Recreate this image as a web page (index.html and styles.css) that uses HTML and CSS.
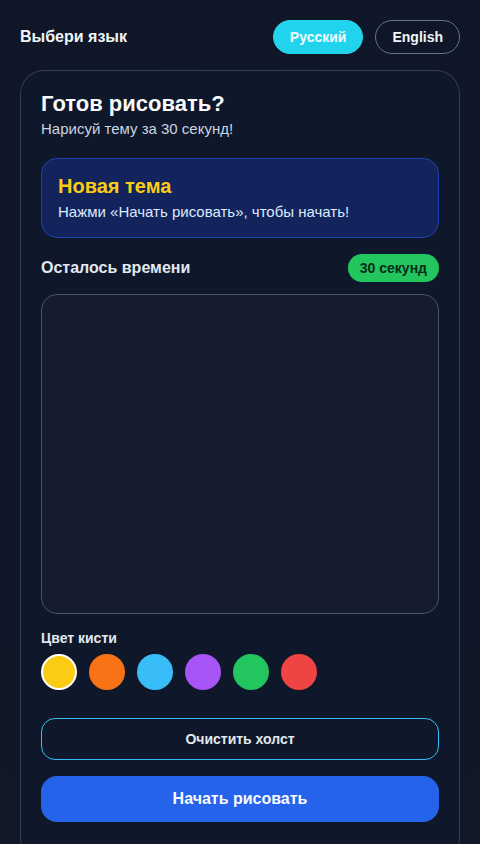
FILE: index.html
```html
<!DOCTYPE html>
<html lang="ru">
<head>
<meta charset="utf-8">
<title>Рисование</title>
<link rel="stylesheet" href="styles.css">
</head>
<body>
<div class="page">
  <header class="top">
    <div class="top-title">Выбери язык</div>
    <div class="langs">
      <button class="lang lang-active">Русский</button>
      <button class="lang">English</button>
    </div>
  </header>
  <main class="card">
    <h1 class="title">Готов рисовать?</h1>
    <p class="subtitle">Нарисуй тему за 30 секунд!</p>
    <section class="topic">
      <div class="topic-name">Новая тема</div>
      <div class="topic-hint">Нажми «Начать рисовать», чтобы начать!</div>
    </section>
    <div class="timer-row">
      <div class="timer-label">Осталось времени</div>
      <div class="badge">30 секунд</div>
    </div>
    <div class="canvas"></div>
    <div class="brush-label">Цвет кисти</div>
    <div class="swatches">
      <span class="swatch sw-yellow sw-active"></span>
      <span class="swatch sw-orange"></span>
      <span class="swatch sw-sky"></span>
      <span class="swatch sw-purple"></span>
      <span class="swatch sw-green"></span>
      <span class="swatch sw-red"></span>
    </div>
    <button class="btn-clear">Очистить холст</button>
    <button class="btn-start">Начать рисовать</button>
  </main>
</div>
</body>
</html>
```
FILE: styles.css
```css
* { box-sizing: border-box; }
html, body { margin: 0; padding: 0; }
body {
  background: radial-gradient(circle at 50% 30%, #0f172a 0%, #0e1627 60%, #111827 100%);
  min-height: 844px;
  font-family: "Liberation Sans", Arial, sans-serif;
  color: #f8fafc;
  overflow: hidden;
}
.page { padding: 20px 20px 0; }
.top {
  display: flex;
  align-items: center;
  justify-content: space-between;
  height: 34px;
}
.top-title { font-size: 16px; font-weight: 700; color: #f1f5f9; }
.langs { display: flex; gap: 12px; }
.lang {
  font-family: inherit;
  font-size: 14px;
  font-weight: 700;
  height: 34px;
  padding: 0 16px;
  border-radius: 17px;
  border: 1px solid #64748b;
  background: transparent;
  color: #f1f5f9;
}
.lang-active {
  background: #22d3ee;
  border-color: #22d3ee;
  color: #f0fdff;
}
.card {
  margin-top: 16px;
  border: 1px solid rgba(148, 163, 184, 0.28);
  border-radius: 24px;
  background: #0f172a;
  padding: 20px 20px 40px;
  display: flex;
  flex-direction: column;
}
.title { margin: 0; font-size: 22px; font-weight: 700; line-height: 26px; color: #f8fafc; }
.subtitle { margin: 3px 0 0; font-size: 15px; line-height: 18px; color: #cbd5e1; }
.topic {
  margin-top: 20px;
  background: #13245c;
  border: 1px solid #1e40af;
  border-radius: 16px;
  padding: 15px 16px 16px;
}
.topic-name { font-size: 20px; font-weight: 700; color: #facc15; line-height: 24px; }
.topic-hint { margin-top: 5px; font-size: 15px; line-height: 18px; color: #dbeafe; }
.timer-row {
  margin-top: 16px;
  display: flex;
  align-items: center;
  justify-content: space-between;
  height: 28px;
}
.timer-label { font-size: 16px; font-weight: 700; color: #e2e8f0; }
.badge {
  background: #22c55e;
  color: #052e16;
  font-size: 14px;
  font-weight: 700;
  height: 28px;
  line-height: 28px;
  padding: 0 12px;
  border-radius: 14px;
}
.canvas {
  margin-top: 12px;
  height: 320px;
  border: 1px solid #475569;
  border-radius: 16px;
  background: #141c2e;
}
.brush-label { margin-top: 16px; font-size: 14px; font-weight: 700; color: #e2e8f0; line-height: 16px; }
.swatches { margin-top: 8px; display: flex; gap: 12px; }
.swatch { width: 36px; height: 36px; border-radius: 50%; display: block; }
.sw-active { border: 2px solid #ffffff; }
.sw-yellow { background: #facc15; }
.sw-orange { background: #f97316; }
.sw-sky { background: #38bdf8; }
.sw-purple { background: #a855f7; }
.sw-green { background: #22c55e; }
.sw-red { background: #ef4444; }
.btn-clear {
  margin-top: 28px;
  height: 42px;
  border: 1px solid #38bdf8;
  border-radius: 14px;
  background: transparent;
  color: #e2e8f0;
  font-family: inherit;
  font-size: 14px;
  font-weight: 700;
}
.btn-start {
  margin-top: 16px;
  height: 46px;
  border: none;
  border-radius: 16px;
  background: #2563eb;
  color: #f8fafc;
  font-family: inherit;
  font-size: 16px;
  font-weight: 700;
}
```
